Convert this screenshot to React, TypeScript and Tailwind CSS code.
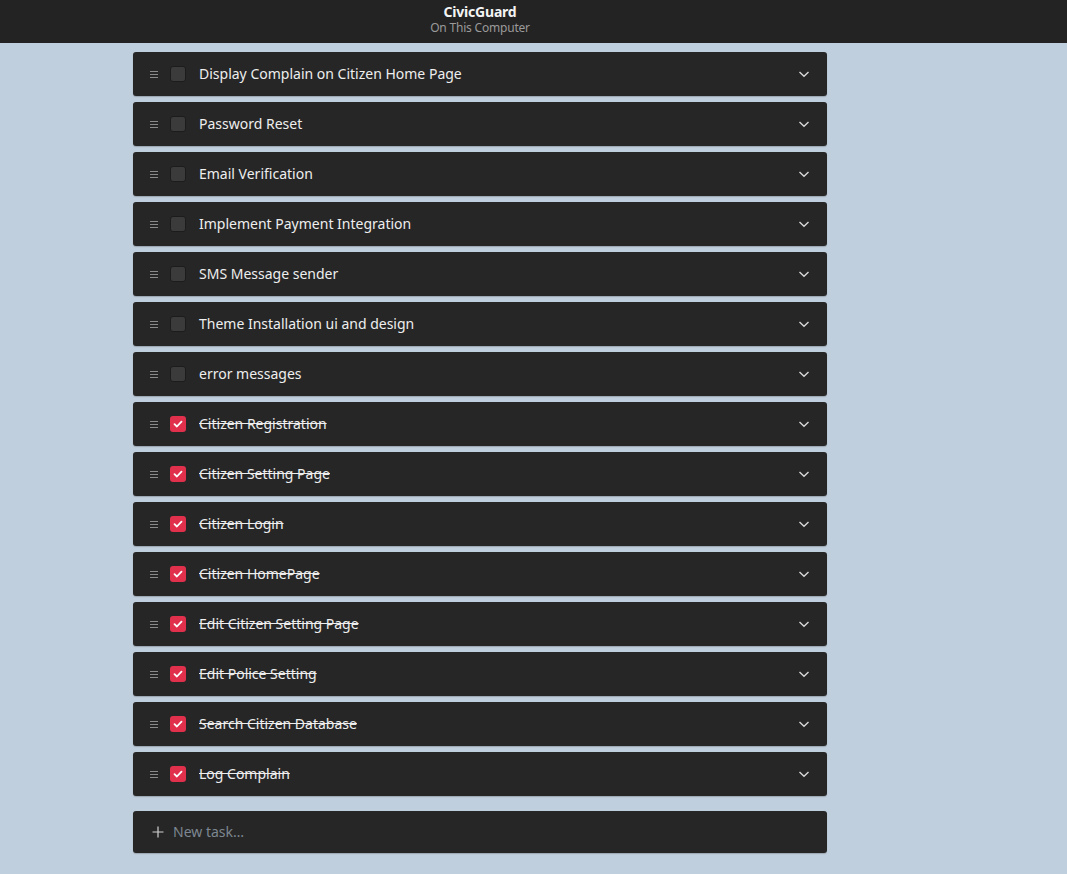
const tasks = [
  { text: 'Display Complain on Citizen Home Page', done: false },
  { text: 'Password Reset', done: false },
  { text: 'Email Verification', done: false },
  { text: 'Implement Payment Integration', done: false },
  { text: 'SMS Message sender', done: false },
  { text: 'Theme Installation ui and design', done: false },
  { text: 'error messages', done: false },
  { text: 'Citizen Registration', done: true },
  { text: 'Citizen Setting Page', done: true },
  { text: 'Citizen Login', done: true },
  { text: 'Citizen HomePage', done: true },
  { text: 'Edit Citizen Setting Page', done: true },
  { text: 'Edit Police Setting', done: true },
  { text: 'Search Citizen Database', done: true },
  { text: 'Log Complain', done: true },
];

export default function App() {
  return (
    <div
      className="min-h-[874px] bg-[#c0cfdd] text-[14px]"
      style={{ fontFamily: '"Noto Sans", "Open Sans", sans-serif' }}
    >
      <header className="h-[43px] bg-[#232323]">
        <div className="ml-[133px] w-[694px] pt-[4px] flex flex-col items-center leading-[16px]">
          <div className="text-[14px] font-bold text-[#f4f4f4] tracking-[-0.2px]">CivicGuard</div>
          <div className="text-[12px] text-[#9a9a9a] tracking-[-0.2px]">On This Computer</div>
        </div>
      </header>

      <div className="ml-[133px] w-[694px] pt-[9px]">
        <ul className="flex flex-col gap-[6px]">
          {tasks.map((task, i) => (
            <li
              key={i}
              className="h-[44px] flex items-center bg-[#262626] rounded-[3px] shadow-[0_1px_1px_rgba(0,0,0,0.2)]"
            >
              <svg className="ml-[17px] w-[8px] h-[8px] text-[#8a8a8a]" viewBox="0 0 8 8">
                <path d="M0 1.5h8M0 4.5h8M0 7.5h8" stroke="currentColor" strokeWidth="1" />
              </svg>
              {task.done ? (
                <div className="ml-[12px] w-[16px] h-[16px] rounded-[3px] bg-[#e0304c] flex items-center justify-center">
                  <svg className="w-[12px] h-[12px]" viewBox="0 0 12 12" fill="none">
                    <path d="M2.5 6.2l2.4 2.3 4.6-4.8" stroke="#fff" strokeWidth="1.8" strokeLinecap="round" strokeLinejoin="round" />
                  </svg>
                </div>
              ) : (
                <div className="ml-[12px] w-[16px] h-[16px] rounded-[3px] bg-[#3b3b3b] border border-[#1c1c1c]" />
              )}
              <div
                className={`ml-[13px] mb-[2px] flex-1 text-[#eeeeee] ${task.done ? 'line-through' : ''}`}
              >
                {task.text}
              </div>
              <svg className="mr-[17px] w-[12px] h-[12px] text-[#d8d8d8]" viewBox="0 0 12 12" fill="none">
                <path d="M1.5 4l4.5 4.2L10.5 4" stroke="currentColor" strokeWidth="1.4" />
              </svg>
            </li>
          ))}
        </ul>

        <div className="mt-[15px] h-[42px] flex items-center bg-[#262626] rounded-[3px] shadow-[0_1px_1px_rgba(0,0,0,0.2)]">
          <svg className="ml-[19px] w-[12px] h-[12px] text-[#cfcfcf]" viewBox="0 0 12 12">
            <path d="M6 0.5v11M0.5 6h11" stroke="currentColor" strokeWidth="1.2" />
          </svg>
          <div className="ml-[9px] mb-[2px] text-[#7d8791]">New task…</div>
        </div>
      </div>
    </div>
  );
}
